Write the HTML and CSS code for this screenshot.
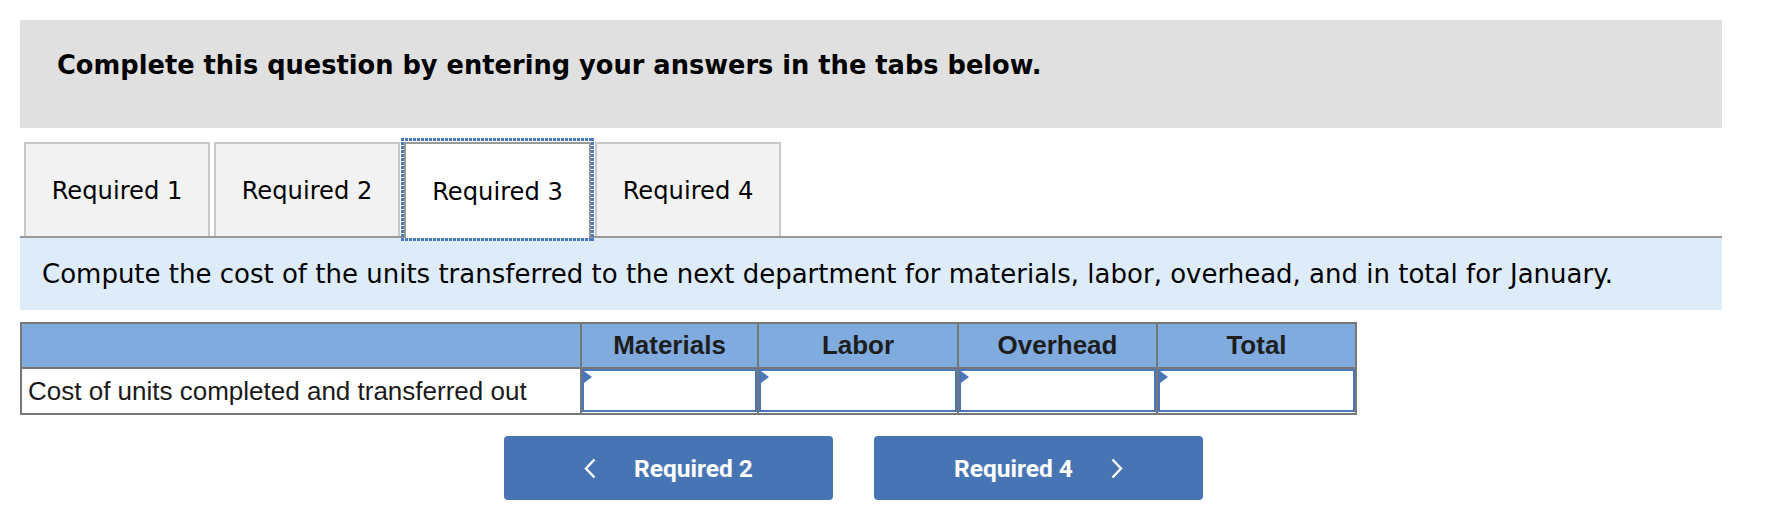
FILE: index.html
```html
<!DOCTYPE html>
<html>
<head>
<meta charset="utf-8">
<link rel="stylesheet" href="styles.css">
</head>
<body>
<div class="page">
  <div class="banner"><h2 class="banner-title">Complete this question by entering your answers in the tabs below.</h2></div>
  <div class="tabs">
    <div class="tab">Required 1</div>
    <div class="tab">Required 2</div>
    <div class="tab active">Required 3</div>
    <div class="tab">Required 4</div>
  </div>
  <div class="prompt">Compute the cost of the units transferred to the next department for materials, labor, overhead, and in total for January.</div>
  <div class="grid">
    <div class="cell head"></div>
    <div class="cell head">Materials</div>
    <div class="cell head">Labor</div>
    <div class="cell head">Overhead</div>
    <div class="cell head">Total</div>
    <div class="cell label">Cost of units completed and transferred out</div>
    <div class="cell entry"><div class="input"></div></div>
    <div class="cell entry"><div class="input"></div></div>
    <div class="cell entry"><div class="input"></div></div>
    <div class="cell entry"><div class="input"></div></div>
  </div>
  <div class="nav">
    <button class="nav-btn">
      <svg class="chev" width="12" height="21" viewBox="0 0 12 21"><polyline points="10.5,1.5 2,10.5 10.5,19.5" fill="none" stroke="#fff" stroke-width="2.4"/></svg>
      <span>Required 2</span>
    </button>
    <button class="nav-btn">
      <span>Required 4</span>
      <svg class="chev" width="12" height="21" viewBox="0 0 12 21"><polyline points="1.5,1.5 10,10.5 1.5,19.5" fill="none" stroke="#fff" stroke-width="2.4"/></svg>
    </button>
  </div>
</div>
</body>
</html>
```
FILE: styles.css
```css
body {
  margin: 0;
  background: #fff;
}
.page {
  padding: 20px 0 0 20px;
  width: 1702px;
}
.banner {
  height: 108px;
  box-sizing: border-box;
  background: #e0e0e0;
  padding: 30px 0 0 37px;
}
.banner-title {
  margin: 0;
  font: bold 25.7px/30px "DejaVu Sans", Verdana, sans-serif;
  color: #000;
}
.tabs {
  display: flex;
  gap: 4px;
  margin-top: 14px;
  padding-left: 4px;
  height: 94px;
}
.tab {
  width: 186px;
  box-sizing: border-box;
  border: 2px solid #c8c8c8;
  border-bottom: none;
  background: #f2f2f2;
  display: flex;
  align-items: center;
  justify-content: center;
  padding-top: 2px;
  font: 24.2px "DejaVu Sans", Verdana, sans-serif;
  color: #000;
}
.tab.active {
  position: relative;
  z-index: 1;
  align-self: flex-start;
  height: 96px;
  width: 187px;
  background: #fff;
  border-color: #999;
}
.tab.active::after {
  content: "";
  position: absolute;
  left: -5px;
  right: -5px;
  top: -6px;
  bottom: -3px;
  background:
    repeating-linear-gradient(90deg, #4a7ac0 0 2.6px, transparent 2.6px 4px) top left / 100% 3px no-repeat,
    repeating-linear-gradient(90deg, #4a7ac0 0 2.6px, transparent 2.6px 4px) bottom left / 100% 3px no-repeat,
    repeating-linear-gradient(180deg, #4a7ac0 0 2.6px, transparent 2.6px 4px) top left / 3px 100% no-repeat,
    repeating-linear-gradient(180deg, #4a7ac0 0 2.6px, transparent 2.6px 4px) top right / 3px 100% no-repeat;
}
.prompt {
  border-top: 2px solid #999;
  background: #deecf9;
  height: 72px;
  padding-left: 22px;
  display: flex;
  align-items: center;
  font: 26px "DejaVu Sans", Verdana, sans-serif;
  color: #000;
}
.grid {
  margin-top: 12px;
  width: 1337px;
  box-sizing: border-box;
  border: 2px solid #777;
  background: #777;
  display: grid;
  grid-template-columns: 558px 175px 198px 197px 197px;
  grid-template-rows: 43px 44px;
  gap: 2px;
  font-family: "Liberation Sans", Arial, sans-serif;
}
.cell {
  background: #fff;
  display: flex;
  align-items: center;
}
.head {
  background: #80abdf;
  justify-content: center;
  font-weight: bold;
  font-size: 26px;
  color: #1e1e1e;
}
.label {
  padding-left: 6px;
  font-size: 26px;
  color: #1a1a1a;
}
.entry {
  align-items: stretch;
  padding-bottom: 1px;
}
.input {
  position: relative;
  flex: 1;
  border: 2px solid #4a77b8;
  background: #fff;
}
.input::before {
  content: "";
  position: absolute;
  left: 0;
  top: 0;
  border-left: 8px solid #4a77b8;
  border-top: 6px solid transparent;
  border-bottom: 6px solid transparent;
}
.nav {
  display: flex;
  gap: 41px;
  margin: 21px 0 0 484px;
}
.nav-btn {
  width: 329px;
  height: 64px;
  border: none;
  border-radius: 4px;
  background: #4775b3;
  color: #fff;
  display: flex;
  align-items: center;
  justify-content: center;
  gap: 38px;
  font: bold 24.5px "Roboto", "Liberation Sans", sans-serif;
  padding: 0;
}
.chev {
  display: block;
}
```
